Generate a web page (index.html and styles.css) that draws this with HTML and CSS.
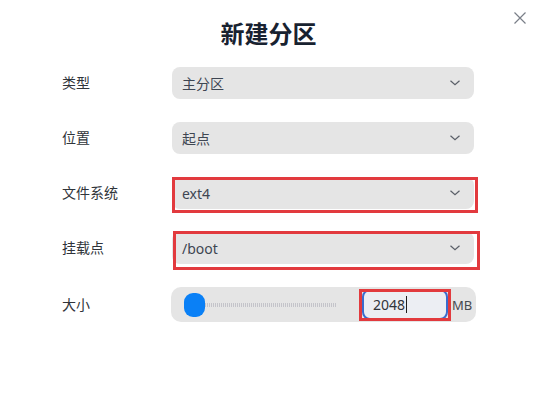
FILE: index.html
```html
<!DOCTYPE html>
<html>
  <head>
    <meta http-equiv="content-type" content="text/html; charset=UTF-8">
    <title>新建分区</title>
    <meta name="viewport" content="width=device-width">
    <link rel="stylesheet" href="styles.css">
  </head>
  <body>
    <div class="dialog">
      <!-- Close button sits over the top-right corner... -->
      <button class="closeButton" type="button" aria-label="关闭">
        <svg width="14" height="14" viewBox="0 0 14 14"><path d="M1.5 1.5 L12.5 12.5 M12.5 1.5 L1.5 12.5" stroke="#7a7f88" stroke-width="1.2" fill="none"/></svg>
      </button>
      <h1 class="title">新建分区</h1>
      <div class="form">
        <span class="label">类型</span>
        <div class="select"><span>主分区</span><svg class="chevron" width="12" height="8" viewBox="0 0 12 8"><path d="M1.5 1.8 L6 5.8 L10.5 1.8" stroke="#5a5f68" stroke-width="1.2" fill="none"/></svg></div>

        <span class="label">位置</span>
        <div class="select"><span>起点</span><svg class="chevron" width="12" height="8" viewBox="0 0 12 8"><path d="M1.5 1.8 L6 5.8 L10.5 1.8" stroke="#5a5f68" stroke-width="1.2" fill="none"/></svg></div>

        <span class="label">文件系统</span>
        <div class="select marked markFs"><span>ext4</span><svg class="chevron" width="12" height="8" viewBox="0 0 12 8"><path d="M1.5 1.8 L6 5.8 L10.5 1.8" stroke="#5a5f68" stroke-width="1.2" fill="none"/></svg></div>

        <span class="label">挂载点</span>
        <div class="select marked markMount"><span>/boot</span><svg class="chevron" width="12" height="8" viewBox="0 0 12 8"><path d="M1.5 1.8 L6 5.8 L10.5 1.8" stroke="#5a5f68" stroke-width="1.2" fill="none"/></svg></div>

        <span class="label">大小</span>
        <div class="sizeControl">
          <div class="slider">
            <span class="thumb"></span>
            <span class="track"></span>
          </div>
          <div class="sizeInput marked markSize"><span>2048</span><span class="caret"></span></div>
          <span class="unit">MB</span>
        </div>
      </div>
    </div>
  </body>
</html>
```

FILE: styles.css
```css
:root {
  --background: rgb(255, 255, 255);
  --title: rgb(24, 34, 48);
  --text: rgb(48, 52, 58);
  --fieldText: rgb(62, 70, 82);
  --field: rgb(229, 229, 229);
  --accent: rgb(10, 128, 246);
  --inputBorder: rgb(58, 108, 206);
  --mark: rgb(226, 58, 62);
}
body {
  margin: 0;
  background-color: var(--background);
  color: var(--text);
  font-family: "Noto Sans", "Noto Sans CJK SC", sans-serif;
  font-size: 14px;
}
.dialog {
  position: relative;
  width: 537px;
  height: 400px;
}
.closeButton {
  position: absolute;
  top: 11px;
  right: 10px;
  padding: 0;
  border: none;
  background: none;
  line-height: 0;
}
.title {
  margin: 0;
  padding-top: 18px;
  text-align: center;
  font-size: 24px;
  line-height: 32px;
  font-weight: 700;
  color: var(--title);
}
.form {
  display: grid;
  grid-template-columns: 110px 302px;
  grid-template-rows: 32px 32px 32px 32px 35px;
  row-gap: 23px;
  align-items: center;
  margin: 17px 0 0 62px;
}
.label { line-height: 20px; }
.select {
  display: flex;
  align-items: center;
  justify-content: space-between;
  height: 32px;
  padding: 0 10px 0 10px;
  border-radius: 8px;
  background-color: var(--field);
  color: var(--fieldText);
}
.chevron { margin-right: 3px; }

/* Red annotation boxes drawn over the screenshot... */
.marked { position: relative; }
.marked::after {
  content: "";
  position: absolute;
  border: 3px solid var(--mark);
}
.markFs::after { left: 0; top: 0; right: -4px; bottom: -4px; }
.markMount::after { left: 1px; top: -1px; right: -6px; bottom: -6px; }
.markSize::after { left: -5px; top: -2px; right: -5px; bottom: -3px; }

.sizeControl {
  display: flex;
  align-items: center;
  height: 35px;
  margin-left: -1px;
  margin-right: -2px;
  padding-left: 13px;
  border-radius: 10px;
  background-color: var(--field);
}
.slider {
  display: flex;
  align-items: center;
}
.thumb {
  width: 21px;
  height: 24px;
  border-radius: 9px;
  background-color: var(--accent);
}
.track {
  width: 131px;
  height: 4px;
  background: repeating-linear-gradient(90deg, rgb(196, 196, 202) 0 1px, transparent 1px 2px);
}
.sizeInput {
  display: flex;
  align-items: center;
  box-sizing: border-box;
  width: 86px;
  height: 31px;
  margin-left: 26px;
  padding-left: 9px;
  border: 2px solid var(--inputBorder);
  border-radius: 8px;
  background-color: rgb(236, 238, 243);
  color: var(--text);
}
.caret {
  width: 1px;
  height: 17px;
  margin-left: 1px;
  background-color: rgb(30, 30, 30);
}
.unit {
  margin-left: 4px;
  color: rgb(70, 74, 80);
  font-size: 13px;
}
```
